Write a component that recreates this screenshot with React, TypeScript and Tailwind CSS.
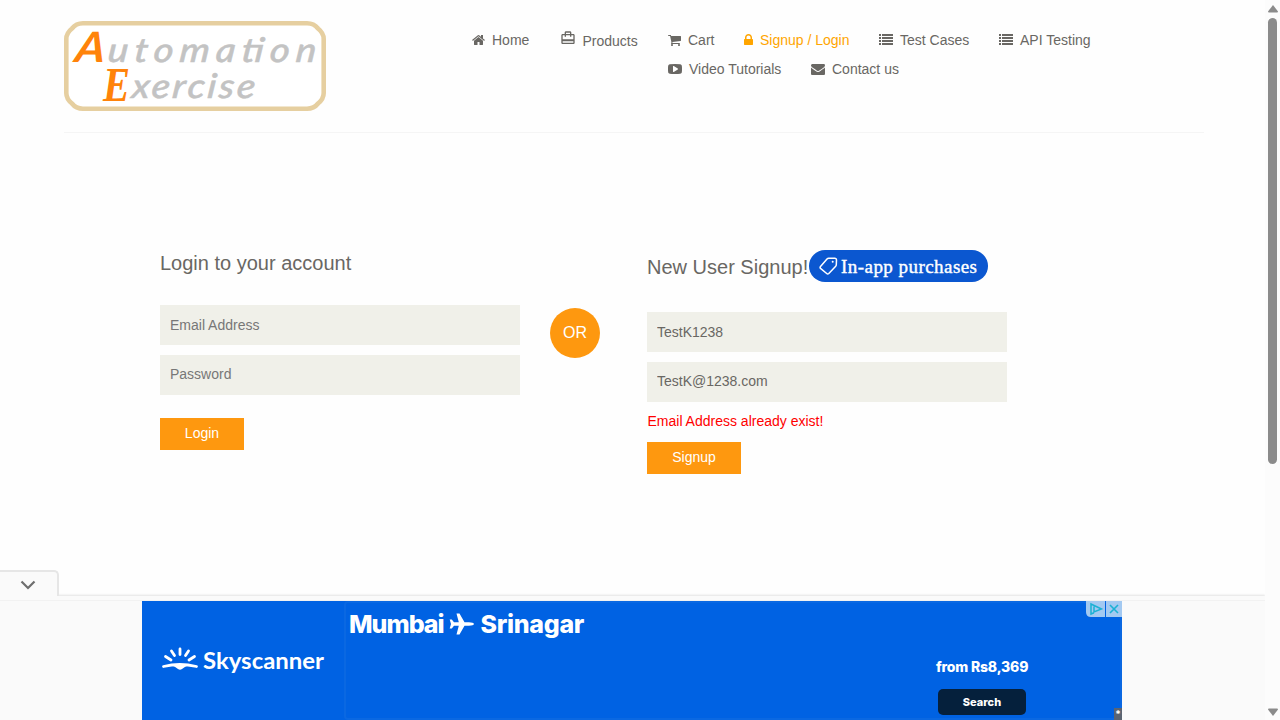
import type { ReactNode } from "react";
import { MdCardTravel } from "react-icons/md";

const HOME =
  "M1408 544v-480q0 -26 -19 -45t-45 -19h-384v384h-256v-384h-384q-26 0 -45 19t-19 45v480q0 1 .5 3t.5 3l575 474l575 -474q1 -2 1 -6zM1631 613l-62 -74q-8 -9 -21 -11h-3q-13 0 -21 7l-692 577l-692 -577q-12 -8 -24 -7q-13 2 -21 11l-62 74q-8 10 -7 23.5t11 21.5l719 599q32 26 76 26t76 -26l244 -204v195q0 14 9 23t23 9h192q14 0 23 -9t9 -23v-408l219 -182q10 -8 11 -21.5t-7 -23.5z";
const CART =
  "M640 0q0 -52 -38 -90t-90 -38t-90 38t-38 90t38 90t90 38t90 -38t38 -90zM1536 0q0 -52 -38 -90t-90 -38t-90 38t-38 90t38 90t90 38t90 -38t38 -90zM1664 1088v-512q0 -24 -16.5 -42.5t-40.5 -21.5l-1044 -122q13 -60 13 -70q0 -16 -24 -64h920q26 0 45 -19t19 -45t-19 -45t-45 -19h-1024q-26 0 -45 19t-19 45q0 11 8 31.5t16 36t21.5 40t15.5 29.5l-177 823h-204q-26 0 -45 19t-19 45t19 45t45 19h256q16 0 28.5 -6.5t19.5 -15.5t13 -24.5t8 -26t5.5 -29.5t4.5 -26h1201q26 0 45 -19t19 -45z";
const LOCK =
  "M320 768h512v192q0 106 -75 181t-181 75t-181 -75t-75 -181v-192zM1152 672v-576q0 -40 -28 -68t-68 -28h-960q-40 0 -68 28t-28 68v576q0 40 28 68t68 28h32v192q0 184 132 316t316 132t316 -132t132 -316v-192h32q40 0 68 -28t28 -68z";
const LIST =
  "M0 0h256v256h-256zM384 0h1408v256h-1408zM0 384h256v256h-256zM384 384h1408v256h-1408zM0 768h256v256h-256zM384 768h1408v256h-1408zM0 1152h256v256h-256zM384 1152h1408v256h-1408z";
const PLAY =
  "M1280 640q0 37 -30 54l-512 320q-31 20 -65 2q-33 -18 -33 -56v-640q0 -38 33 -56q16 -8 31 -8q20 0 34 10l512 320q30 17 30 54zM1792 640q0 -96 -1 -150t-8.5 -136.5t-22.5 -147.5q-16 -73 -69 -123t-124 -58q-222 -25 -671 -25t-671 25q-71 8 -124.5 58t-69.5 123q-14 65 -21.5 147.5t-8.5 136.5t-1 150t1 150t8.5 136.5t22.5 147.5q16 73 69 123t124 58q222 25 671 25t671 -25q71 -8 124.5 -58t69.5 -123q14 -65 21.5 -147.5t8.5 -136.5t1 -150z";
const ENVELOPE =
  "M1792 826v-794q0 -66 -47 -113t-113 -47h-1472q-66 0 -113 47t-47 113v794q44 -49 101 -87q362 -246 497 -345q57 -42 92.5 -65.5t94.5 -48t110 -24.5h2q51 0 110 24.5t94.5 48t92.5 65.5q170 123 498 345q57 39 100 87zM1792 1120q0 -79 -49 -151t-122 -123q-376 -261 -468 -325q-10 -7 -42.5 -30.5t-54 -38t-52 -32.5t-57.5 -27t-50 -9h-2q-23 0 -50 9t-57.5 27t-52 32.5t-54 38t-42.5 30.5q-91 64 -262 182.5t-205 142.5q-62 42 -117 115.5t-55 136.5q0 78 41.5 130t118.5 52h1472q65 0 112.5 -47t47.5 -113z";

function Glyph({ d, units }: { d: string; units: number }) {
  return (
    <svg width={units / 128} height={14} viewBox={`0 -1536 ${units} 1792`} fill="currentColor" className="shrink-0">
      <path d={d} fillRule="evenodd" transform="scale(1,-1)" />
    </svg>
  );
}

function NavItem({ icon, children, className = "" }: { icon: ReactNode; children: ReactNode; className?: string }) {
  return (
    <li className={`flex items-center gap-[7px] whitespace-nowrap ${className}`}>
      {icon}
      <span>{children}</span>
    </li>
  );
}

function Logo() {
  return (
    <svg width="262" height="90" viewBox="0 0 262 90" fontFamily="Lato, sans-serif" fontStyle="italic" fontWeight="500">
      <path
        d="M19 2.300H243Q250 2.300 254 7.500Q259.700 12 259.700 18V72Q259.700 78 254 82.500Q250 87.700 243 87.700H19Q12 87.700 8 82.500Q2.300 78 2.300 72V18Q2.300 12 8 7.500Q12 2.300 19 2.300Z"
        fill="#fff"
        stroke="#e6cfa0"
        strokeWidth="4.600"
      />
      <text transform="translate(10 41) skewX(-8)" fontSize="42" fontWeight="700" fill="#ff830a" textLength="30" lengthAdjust="spacingAndGlyphs">A</text>
      <text transform="translate(43 40.500) skewX(-6) scale(1.12 1)" fontSize="34" fill="#c3c3c3" stroke="#c3c3c3" strokeWidth=".5" textLength="186">utomation</text>
      <text transform="translate(39 80)" fontSize="48" fontFamily="Liberation Serif, serif" fontWeight="700" fill="#ff830a" textLength="27" lengthAdjust="spacingAndGlyphs">E</text>
      <text transform="translate(67 77) skewX(-6) scale(1.120 1)" fontSize="34" fill="#c3c3c3" stroke="#c3c3c3" strokeWidth=".5" textLength="110">xercise</text>
    </svg>
  );
}

function Field({ type = "text", label, value, className = "" }: { type?: string; label: string; value?: string; className?: string }) {
  return (
    <input
      type={type}
      placeholder={label}
      defaultValue={value}
      className={`mb-[10px] block h-10 w-[360px] bg-[#f0f0e9] px-[10px] text-[14px] text-[#696763] placeholder:text-[#777] outline-none ${className}`}
    />
  );
}

function Header() {
  return (
    <header className="ml-16 flex h-[133px] w-[1140px] shrink-0 border-b border-[#f5f5f5] pt-[21px]">
      <Logo />
      <nav className="ml-[146px] pt-[9px] text-[14px] leading-5 text-[#696763]">
        <ul className="flex h-[21px] items-start">
          <NavItem className="w-[88px]" icon={<Glyph d={HOME} units={1664} />}>Home</NavItem>
          <li className="flex w-[108px] gap-[6px]">
            <MdCardTravel size={16} />
            <span className="pl-[0.5px] pt-px">Products</span>
          </li>
          <NavItem className="w-[76px]" icon={<Glyph d={CART} units={1664} />}>Cart</NavItem>
          <NavItem className="w-[135px] text-[#ffa500]" icon={<Glyph d={LOCK} units={1152} />}>Signup / Login</NavItem>
          <NavItem className="w-[120px]" icon={<Glyph d={LIST} units={1792} />}>Test Cases</NavItem>
          <NavItem icon={<Glyph d={LIST} units={1792} />}>API Testing</NavItem>
        </ul>
        <ul className="mt-[8px] flex pl-[196px]">
          <NavItem className="w-[143px]" icon={<Glyph d={PLAY} units={1792} />}>Video Tutorials</NavItem>
          <NavItem icon={<Glyph d={ENVELOPE} units={1792} />}>Contact us</NavItem>
        </ul>
      </nav>
    </header>
  );
}

function LoginForm() {
  return (
    <section className="w-[360px]">
      <h2 className="mt-[2px] mb-[31px] text-[20px] leading-[22px]">Login to your account</h2>
      <Field label="Email Address" />
      <Field label="Password" type="password" className="pb-[2px]" />
      <button className="mt-[23px] block h-8 w-[84px] bg-[#fe980f] pb-px text-[14px] text-white">Login</button>
    </section>
  );
}

function SignupForm() {
  return (
    <section className="ml-[47px] w-[360px]">
      <h2 className="mb-[30px] flex h-8 items-center text-[20px] whitespace-nowrap">
        <span className="w-[162px] pt-[2px]">New User Signup!</span>
        <span className="flex h-8 w-[179px] shrink-0 items-center rounded-full bg-[#0b57d0] pl-[10px] text-white">
          <svg width="19" height="20" viewBox="0 0 19 20" fill="none" stroke="white" strokeWidth="1.500" strokeLinejoin="round">
            <path d="M1.500 10.500L8 3Q8.700 2.200 9.600 2.200L16 2.200Q17.500 2.300 17.500 3.700L17.300 8.700Q17.300 9.600 16.700 10.200L9.800 17.500Q8.700 18.500 7.700 17.500L1.500 12.400Q.7 11.500 1.500 10.500Z" />
            <circle cx="13.700" cy="5.700" r="1" fill="white" stroke="none" />
          </svg>
          <span className="ml-[3px] pt-[2px] font-['Liberation_Serif',serif] text-[19px] leading-[24px] tracking-[0.45px] [-webkit-text-stroke:0.4px_white]">
            In-app purchases
          </span>
        </span>
      </h2>
      <Field label="Name" value="TestK1238" />
      <Field label="Email Address" value="TestK@1238.com" className="pb-[2px]" />
      <p className="-mt-px pl-[0.5px] text-[14px] leading-5 text-[#f00]">Email Address already exist!</p>
      <button className="mt-[11px] block h-8 w-[94px] bg-[#fe980f] pb-[2px] text-[14px] text-white">Signup</button>
    </section>
  );
}

function SkyscannerLogo() {
  return (
    <svg width="164" height="32" viewBox="0 0 164 32" className="ml-[19px]" fill="white">
      <path d="M2.500 20.500Q18.500 16.500 35.500 20.500" fill="none" stroke="white" strokeWidth="2.800" strokeLinecap="round" />
      <path d="M10 19H28Q24 20.500 21 23Q19 24.500 17 23Q14 20.500 10 19Z" />
      <path d="M19 3V8.500M10.500 5L13.500 9.500M27.500 5L24.500 9.500M4.500 10.500L10 14M33.500 10.500L28 14" stroke="white" strokeWidth="2.800" strokeLinecap="round" />
      <text x="42" y="23" fontSize="22" fontFamily="Lato, sans-serif" fontWeight="700" textLength="121" lengthAdjust="spacingAndGlyphs">Skyscanner</text>
    </svg>
  );
}

function Advert() {
  return (
    <aside className="shrink-0">
      <div className="flex h-[26px]">
        <button className="flex h-[26px] w-[59px] items-center justify-center rounded-tr-[5px] border-t-2 border-r-2 border-[#e6e6e6] bg-[#fafafa] pt-[2px] pr-px">
          <svg width="16" height="10" viewBox="0 0 16 10" fill="none" stroke="#6e6e6e" strokeWidth="2.200">
            <path d="M1.500 1.500L8 8L14.500 1.500" />
          </svg>
        </button>
      </div>
      <div className="flex h-[124px] flex-col bg-[#fafafa] shadow-[0_-1px_2px_#e2e2e2]">
        <div className="h-[5px] border-b border-[#f2f2f2]" />
        <div className="ml-[142px] flex h-[119px] w-[980px] bg-[#0062e3] font-['Inter',sans-serif] text-white">
          <div className="w-[202px] pt-[45px]"><SkyscannerLogo /></div>
          <div className="relative flex flex-1 flex-col items-start rounded border-2 border-[#0a68e2]">
            <h3 className="mt-[7px] ml-[3px] flex items-center text-[25px] leading-[28px] font-extrabold">
              <span className="w-[99.500px] tracking-[-1px]">Mumbai</span>
              <svg width="25" height="24" viewBox="0 0 25 24" fill="white">
                <path d="M25 12Q24.500 13.700 20 13.700H15.500L10.500 22.500H7.500L9.800 13.700H5L2.800 16.500H.7L2 12L.7 7.500H2.800L5 10.300H9.800L7.500 1.500H10.500L15.500 10.300H20Q24.500 10.300 25 12Z" />
              </svg>
              <span className="ml-[7px] tracking-[-0.3px]">Srinagar</span>
            </h3>
            <div className="mt-[19px] ml-[590px] flex flex-col items-start">
              <span className="text-[14px] leading-[20px] font-extrabold tracking-[-0.2px]">from Rs8,369</span>
              <button className="mt-[12px] ml-[2px] h-[26px] w-[88px] rounded-[5px] bg-[#05203c] text-[11px] font-extrabold">Search</button>
            </div>
            <div className="absolute -top-[2px] -right-[2px] flex gap-px">
              <svg width="19" height="16" viewBox="0 0 19 16">
                <path d="M0 0H19V16H5Q0 16 0 11Z" fill="#a3c9f1" />
                <path d="M8 5.500V11L15.500 8L5 3V13L8 11.700" fill="none" stroke="#1bb1d4" strokeWidth="1.500" />
              </svg>
              <svg width="16" height="16" viewBox="0 0 16 16">
                <path d="M0 0H16V16H0Z" fill="#a3c9f1" />
                <path d="M4 4L12 12M12 4L4 12" stroke="#1bb1d4" strokeWidth="1.600" />
              </svg>
            </div>
            <span className="absolute -right-[2px] -bottom-[2px] h-3 w-[8px] bg-[#5b6472] text-center text-[10px] leading-[12px] font-bold">*</span>
          </div>
        </div>
      </div>
    </aside>
  );
}

function Scrollbar() {
  return (
    <div className="flex w-[15px] shrink-0 flex-col items-center bg-[#fcfcfc] pt-[5px] pb-[4px]">
      <svg width="10" height="8" viewBox="0 0 10 8" fill="#8b8b8b"><path d="M5 0L10 6.500Q10 7.500 9 7.500H1Q0 7.500 0 6.500Z" /></svg>
      <div className="mt-[5px] h-[446px] w-[9px] rounded-full bg-[#8b8b8b]" />
      <svg width="10" height="8" viewBox="0 0 10 8" fill="#8b8b8b" className="mt-auto"><path d="M5 8L10 1.500Q10 .5 9 .5H1Q0 .5 0 1.500Z" /></svg>
    </div>
  );
}

export default function App() {
  return (
    <div className="flex h-[720px] w-full overflow-hidden bg-[#fefefe] font-['Liberation_Sans',Arial,sans-serif] text-[#696763]">
      <div className="flex min-w-0 flex-1 flex-col">
        <Header />
        <main className="flex flex-1 items-start pt-[117px] pl-[160px]">
          <LoginForm />
          <div className="mt-[58px] ml-[30px] flex size-[50px] items-center justify-center rounded-full bg-[#fe980f] text-[16px] text-white">OR</div>
          <SignupForm />
        </main>
        <Advert />
      </div>
      <Scrollbar />
    </div>
  );
}
